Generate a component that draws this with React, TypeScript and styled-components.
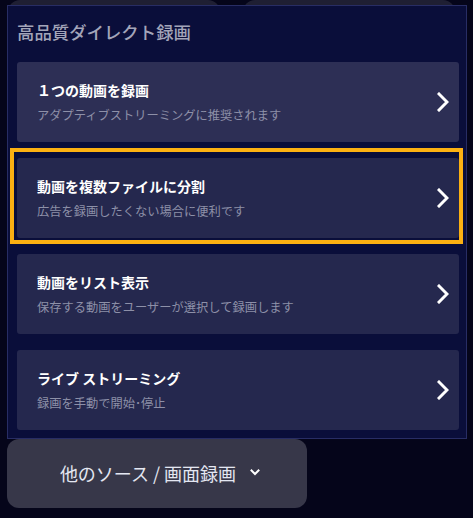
import React from "react";
import styled, { createGlobalStyle } from "styled-components";

const GlobalStyle = createGlobalStyle`
  html, body {
    margin: 0;
    padding: 0;
    background: #05051a;
  }
  body {
    font-family: "Noto Sans CJK JP", "Noto Sans", sans-serif;
    width: 473px;
    height: 518px;
    overflow: hidden;
  }
`;

const Page = styled.div`
  position: relative;
  display: flex;
  flex-direction: column;
  align-items: flex-start;
  padding: 5px 0 0 7px;
`;

const TabRow = styled.div`
  position: absolute;
  top: 0;
  left: 8px;
  display: flex;
  gap: 23px;
  z-index: 0;
`;

const Tab = styled.div`
  width: 212px;
  height: 70px;
  border-radius: 12px;
  background: #1f1f33;
`;

const Dropdown = styled.div`
  position: relative;
  z-index: 1;
  box-sizing: border-box;
  width: 460px;
  height: 434px;
  background: #0a0e3a;
  border: 1px solid #282d64;
  padding: 0 7px 0 9px;
  display: flex;
  flex-direction: column;
`;

const Heading = styled.h2`
  margin: 0;
  padding: 13px 0 0 0;
  height: 56px;
  box-sizing: border-box;
  font-size: 17.4px;
  line-height: 26px;
  font-weight: 500;
  color: #a3a5b9;
`;

const List = styled.div`
  display: flex;
  flex-direction: column;
  gap: 16px;
`;

const ItemWrap = styled.div<{ $focused?: boolean }>`
  position: relative;
  ${(p) =>
    p.$focused &&
    `
    &::before {
      content: "";
      position: absolute;
      top: -10px;
      left: -7px;
      right: -4px;
      bottom: -6px;
      border: 4px solid #fbb012;
      pointer-events: none;
    }
  `}
`;

const Card = styled.div<{ $hover?: boolean }>`
  box-sizing: border-box;
  height: 80px;
  border-radius: 3px;
  background: ${(p) => (p.$hover ? "#2d2f55" : "#25284e")};
  display: flex;
  align-items: center;
  justify-content: space-between;
  padding: 0 10px 0 20px;
`;

const Texts = styled.div`
  display: flex;
  flex-direction: column;
  gap: 7px;
`;

const Title = styled.div`
  font-size: 14px;
  line-height: 20px;
  font-weight: 700;
  color: #ffffff;
`;

const Sub = styled.div`
  font-size: 12.25px;
  line-height: 17px;
  color: #8d90a8;
`;

const SourceButton = styled.button`
  margin-top: 0;
  width: 300px;
  height: 69px;
  border: none;
  border-radius: 12px;
  background: #373749;
  color: #e4e7f2;
  font-family: "Noto Sans CJK JP", "Noto Sans", sans-serif;
  font-size: 18px;
  display: flex;
  align-items: center;
  justify-content: center;
  gap: 14px;
  padding: 0 0 2px 6px;
`;

const Chevron = () => (
  <svg width="12" height="20" viewBox="0 0 12 20" fill="none">
    <polyline
      points="2,2 10,10 2,18"
      stroke="#ffffff"
      strokeWidth="3"
      strokeLinecap="square"
      strokeLinejoin="miter"
    />
  </svg>
);

const SmallChevron = () => (
  <svg width="10" height="7" viewBox="0 0 10 7" fill="none">
    <polyline
      points="1.5,1.5 5,5 8.5,1.5"
      stroke="#ffffff"
      strokeWidth="2"
      strokeLinecap="square"
    />
  </svg>
);

const items = [
  { title: "１つの動画を録画", sub: "アダプティブストリーミングに推奨されます", hover: true },
  { title: "動画を複数ファイルに分割", sub: "広告を録画したくない場合に便利です", focused: true },
  { title: "動画をリスト表示", sub: "保存する動画をユーザーが選択して録画します" },
  { title: "ライブ ストリーミング", sub: "録画を手動で開始･停止" },
];

export default function App() {
  return (
    <>
      <GlobalStyle />
      <Page>
        <TabRow>
          <Tab />
          <Tab />
        </TabRow>
        <Dropdown>
          <Heading>高品質ダイレクト録画</Heading>
          <List>
            {items.map((it) => (
              <ItemWrap key={it.title} $focused={it.focused}>
                <Card $hover={it.hover}>
                  <Texts>
                    <Title>{it.title}</Title>
                    <Sub>{it.sub}</Sub>
                  </Texts>
                  <Chevron />
                </Card>
              </ItemWrap>
            ))}
          </List>
        </Dropdown>
        <SourceButton>
          他のソース / 画面録画
          <SmallChevron />
        </SourceButton>
      </Page>
    </>
  );
}
